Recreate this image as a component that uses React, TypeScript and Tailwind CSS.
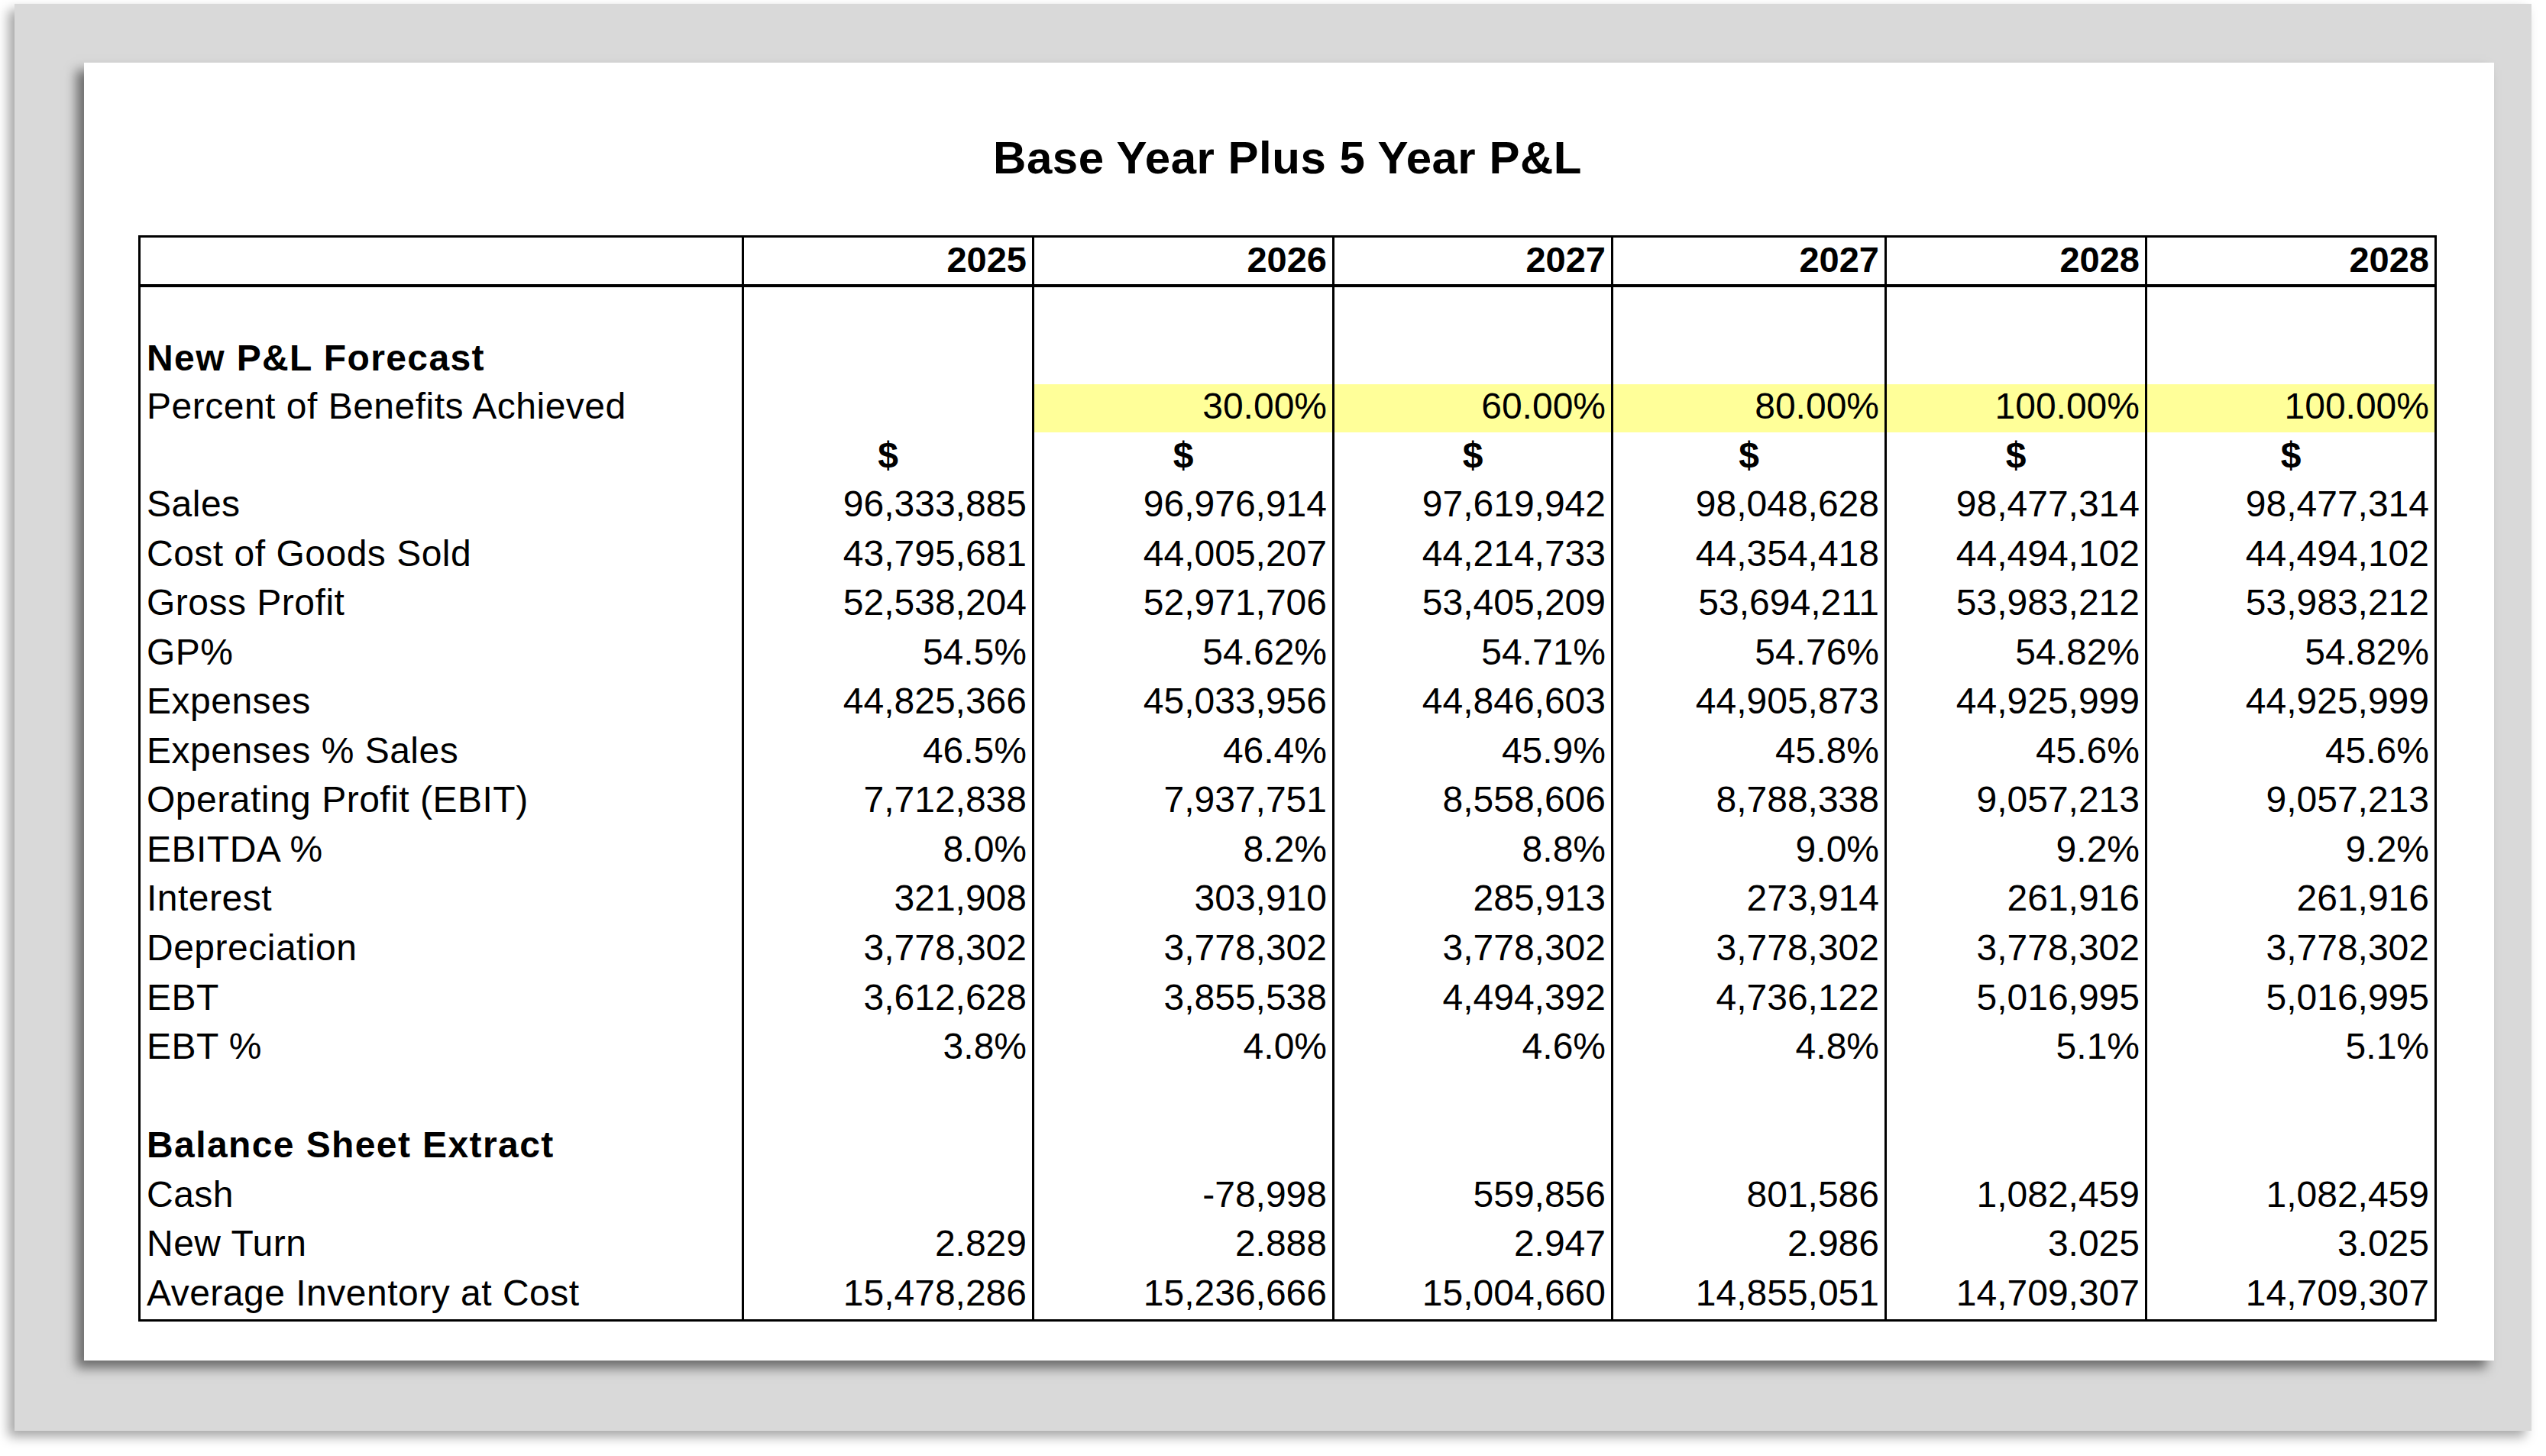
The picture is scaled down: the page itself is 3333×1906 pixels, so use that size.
const YEARS = ["2025", "2026", "2027", "2027", "2028", "2028"];

type Row =
  | { kind: "blank" }
  | { kind: "section"; label: string }
  | { kind: "dollar" }
  | { kind: "data"; label: string; values: string[]; highlight?: boolean };

const ROWS: Row[] = [
  { kind: "blank" },
  { kind: "section", label: "New P&L Forecast" },
  {
    kind: "data",
    label: "Percent of Benefits Achieved",
    values: ["", "30.00%", "60.00%", "80.00%", "100.00%", "100.00%"],
    highlight: true,
  },
  { kind: "dollar" },
  { kind: "data", label: "Sales", values: ["96,333,885", "96,976,914", "97,619,942", "98,048,628", "98,477,314", "98,477,314"] },
  { kind: "data", label: "Cost of Goods Sold", values: ["43,795,681", "44,005,207", "44,214,733", "44,354,418", "44,494,102", "44,494,102"] },
  { kind: "data", label: "Gross Profit", values: ["52,538,204", "52,971,706", "53,405,209", "53,694,211", "53,983,212", "53,983,212"] },
  { kind: "data", label: "GP%", values: ["54.5%", "54.62%", "54.71%", "54.76%", "54.82%", "54.82%"] },
  { kind: "data", label: "Expenses", values: ["44,825,366", "45,033,956", "44,846,603", "44,905,873", "44,925,999", "44,925,999"] },
  { kind: "data", label: "Expenses % Sales", values: ["46.5%", "46.4%", "45.9%", "45.8%", "45.6%", "45.6%"] },
  { kind: "data", label: "Operating Profit (EBIT)", values: ["7,712,838", "7,937,751", "8,558,606", "8,788,338", "9,057,213", "9,057,213"] },
  { kind: "data", label: "EBITDA %", values: ["8.0%", "8.2%", "8.8%", "9.0%", "9.2%", "9.2%"] },
  { kind: "data", label: "Interest", values: ["321,908", "303,910", "285,913", "273,914", "261,916", "261,916"] },
  { kind: "data", label: "Depreciation", values: ["3,778,302", "3,778,302", "3,778,302", "3,778,302", "3,778,302", "3,778,302"] },
  { kind: "data", label: "EBT", values: ["3,612,628", "3,855,538", "4,494,392", "4,736,122", "5,016,995", "5,016,995"] },
  { kind: "data", label: "EBT %", values: ["3.8%", "4.0%", "4.6%", "4.8%", "5.1%", "5.1%"] },
  { kind: "blank" },
  { kind: "section", label: "Balance Sheet Extract" },
  { kind: "data", label: "Cash", values: ["", "-78,998", "559,856", "801,586", "1,082,459", "1,082,459"] },
  { kind: "data", label: "New Turn", values: ["2.829", "2.888", "2.947", "2.986", "3.025", "3.025"] },
  { kind: "data", label: "Average Inventory at Cost", values: ["15,478,286", "15,236,666", "15,004,660", "14,855,051", "14,709,307", "14,709,307"] },
];

const grid = "grid grid-cols-[787px_380px_393px_365px_358px_341px_379px]";

function HeaderRow() {
  return (
    <div className={`${grid} h-[65px] border-b-4 border-black`}>
      <div />
      {YEARS.map((y, i) => (
        <div
          key={i}
          className="border-l-[3px] border-black flex items-end justify-end pr-[7px] pb-[5px] text-[47px] font-bold leading-[54px]"
        >
          {y}
        </div>
      ))}
    </div>
  );
}

function BodyRow({ row, tall }: { row: Row; tall: boolean }) {
  const label = row.kind === "section" || row.kind === "data" ? row.label : "";
  const bold = row.kind === "section";

  return (
    <div className={`${grid} ${tall ? "h-[64.56px]" : "h-[63.4px]"}`}>
      <div
        className={`flex items-end pl-[8px] pb-[7px] leading-[54px] ${bold ? "font-bold tracking-[1.4px]" : "tracking-[0.5px]"}`}
      >
        {label}
      </div>
      {[0, 1, 2, 3, 4, 5].map((i) => {
        if (row.kind === "dollar") {
          return (
            <div key={i} className="border-l-[3px] border-black flex items-end justify-center pb-[7px] leading-[54px] font-bold">
              $
            </div>
          );
        }
        const value = row.kind === "data" ? row.values[i] : "";
        const yellow = row.kind === "data" && row.highlight && i > 0;
        return (
          <div
            key={i}
            className={`border-l-[3px] border-black flex items-end justify-end pr-[7px] pb-[7px] leading-[54px] ${yellow ? "bg-[#ffff99]" : ""}`}
          >
            {value}
          </div>
        );
      })}
    </div>
  );
}

export default function App() {
  return (
    <div className="w-[3333px] h-[1906px] bg-white pt-[5px] pl-[19px] font-['Liberation_Sans',Arial,sans-serif] text-black">
      <div className="w-[3295px] h-[1868px] bg-[#d9d9d9] pt-[77px] pl-[91px] shadow-[-8px_8px_14px_rgba(0,0,0,0.35)]">
        <div className="w-[3155px] h-[1699px] bg-white pt-[95px] pl-[71px] shadow-[-10px_10px_14px_rgba(0,0,0,0.5)]">
          <h1 className="w-[3009px] text-center text-[60px] font-bold leading-[60px] tracking-[0.5px]">
            Base Year Plus 5 Year P&amp;L
          </h1>
          <div className="mt-[71px] w-[3009px] border-[3px] border-black text-[48px]">
            <HeaderRow />
            {ROWS.map((row, i) => (
              <BodyRow key={i} row={row} tall={i >= 4} />
            ))}
          </div>
        </div>
      </div>
    </div>
  );
}
